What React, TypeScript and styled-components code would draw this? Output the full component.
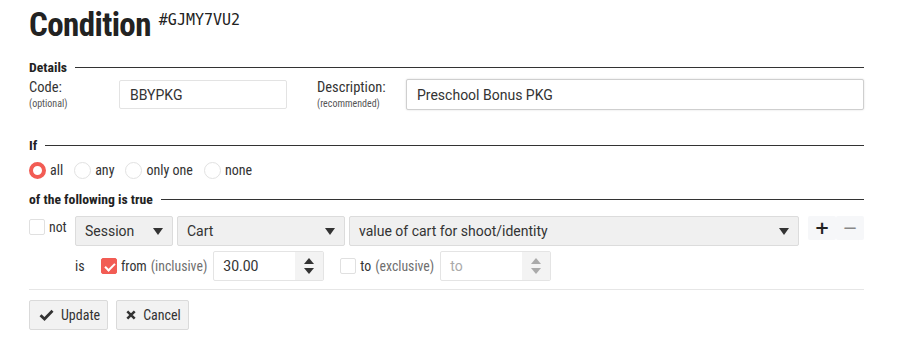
import React, {useState} from 'react'
import styled, {createGlobalStyle} from 'styled-components'

const Global = createGlobalStyle`
  body {
    margin: 0;
    background: #fff;
    color: #333;
    font-family: 'Roboto Condensed', 'Liberation Sans Narrow', Roboto, sans-serif;
  }
  * { box-sizing: border-box; }
`

const RED = '#f25c54'

const App = () => {
  const [mode, setMode] = useState('all')
  const [not, setNot] = useState(false)
  const [fromOn, setFromOn] = useState(true)
  const [toOn, setToOn] = useState(false)

  return (
    <Page>
      <Global />
      <Header>
        <Title>Condition</Title>
        <Code>#GJMY7VU2</Code>
      </Header>

      <Legend>Details</Legend>
      <DetailsRow>
        <FieldLabel $w={90}>
          Code:
          <small>(optional)</small>
        </FieldLabel>
        <TextInput $w={168} defaultValue="BBYPKG" />
        <FieldLabel $w={89} $ml={30}>
          Description:
          <small>(recommended)</small>
        </FieldLabel>
        <TextInput $focused defaultValue="Preschool Bonus PKG" style={{flex: 1}} />
      </DetailsRow>

      <Legend $mt={26}>If</Legend>
      <RadioRow>
        {['all', 'any', 'only one', 'none'].map((m) => (
          <RadioLabel key={m} onClick={() => setMode(m)}>
            <Radio $on={mode === m} />
            {m}
          </RadioLabel>
        ))}
      </RadioRow>

      <Legend $mt={11}>of the following is true</Legend>
      <RuleRow>
        <CheckLabel onClick={() => setNot(!not)}>
          <Check $on={not} />
          not
        </CheckLabel>
        <Select $w={98}>Session<Caret /></Select>
        <Select $w={168}>Cart<Caret /></Select>
        <Select style={{flex: 1}}>value of cart for shoot/identity<Caret /></Select>
        <PlusMinus>
          <IconBtn>+</IconBtn>
          <IconBtn $muted>−</IconBtn>
        </PlusMinus>
      </RuleRow>
      <RangeRow>
        <IsLabel>is</IsLabel>
        <CheckLabel onClick={() => setFromOn(!fromOn)}>
          <Check $on={fromOn} />
          from <Muted>(inclusive)</Muted>
        </CheckLabel>
        <NumberBox>
          <span>30.00</span>
          <Spinner><SpinUp /><SpinDown /></Spinner>
        </NumberBox>
        <CheckLabel $ml={12} onClick={() => setToOn(!toOn)}>
          <Check $on={toOn} />
          to <Muted>(exclusive)</Muted>
        </CheckLabel>
        <NumberBox $disabled>
          <Placeholder>to</Placeholder>
          <Spinner $disabled><SpinUp /><SpinDown /></Spinner>
        </NumberBox>
      </RangeRow>

      <Divider />
      <Actions>
        <Button>
          <svg width="15" height="12" viewBox="0 0 15 12">
            <path d="M1.5 6.2 L5.5 10 L13.5 1.8" fill="none" stroke="#333" strokeWidth="2.8" />
          </svg>
          Update
        </Button>
        <Button>
          <svg width="10" height="10" viewBox="0 0 10 10">
            <path d="M1.3 1.3 L8.7 8.7 M8.7 1.3 L1.3 8.7" fill="none" stroke="#333" strokeWidth="2.5" />
          </svg>
          Cancel
        </Button>
      </Actions>
    </Page>
  )
}

export default App

const Page = styled.div`
  width: 907px;
  padding: 5px 43px 20px 29px;
`

const Header = styled.div`
  display: flex;
  align-items: flex-start;
  gap: 8px;
  height: 53px;
`

const Title = styled.h1`
  margin: 0;
  font-size: 33px;
  font-weight: 700;
  line-height: 40px;
  color: #222;
  letter-spacing: -0.6px;
`

const Code = styled.span`
  font-family: 'DejaVu Sans Mono', monospace;
  font-size: 15px;
  line-height: 18px;
  margin-top: 6px;
  color: #222;
`

const Legend = styled.div<{$mt?: number}>`
  display: flex;
  align-items: center;
  gap: 8px;
  margin-top: ${(p) => p.$mt ?? 0}px;
  font-size: 13.7px;
  font-weight: 700;
  line-height: 18px;
  color: #222;
  &::after {
    content: '';
    flex: 1;
    height: 1px;
    background: #333;
  }
`

const DetailsRow = styled.div`
  display: flex;
  align-items: center;
  margin-top: 3px;
`

const FieldLabel = styled.div<{$w: number, $ml?: number}>`
  width: ${(p) => p.$w}px;
  margin-left: ${(p) => p.$ml ?? 0}px;
  display: flex;
  flex-direction: column;
  font-size: 14.5px;
  line-height: 15px;
  color: #333;
  small {
    font-size: 10px;
    line-height: 12px;
    color: #555;
    margin-top: 3px;
  }
`

const TextInput = styled.input<{$w?: number, $focused?: boolean}>`
  width: ${(p) => (p.$w ? `${p.$w}px` : 'auto')};
  height: ${(p) => (p.$focused ? 31 : 29)}px;
  border: 1px solid ${(p) => (p.$focused ? '#cfcfcf' : '#e3e3e3')};
  box-shadow: ${(p) => (p.$focused ? '0 0 2px rgba(0,0,0,.15)' : 'none')};
  border-radius: 2px;
  padding: 0 10px;
  font-family: Roboto, sans-serif;
  font-size: 14px;
  color: #333;
  outline: none;
`

const RadioRow = styled.div`
  display: flex;
  align-items: center;
  gap: 11px;
  margin-top: 7px;
  height: 18px;
`

const RadioLabel = styled.label`
  display: flex;
  align-items: center;
  gap: 4px;
  font-size: 14px;
  color: #333;
  cursor: pointer;
`

const Radio = styled.span<{$on: boolean}>`
  width: 17px;
  height: 17px;
  border-radius: 50%;
  border: ${(p) => (p.$on ? `4px solid ${RED}` : '1px solid #e2e2e2')};
  background: #fff;
`

const RuleRow = styled.div`
  display: flex;
  align-items: flex-start;
  gap: 4px;
  margin-top: 8px;
`

const CheckLabel = styled.label<{$ml?: number}>`
  display: flex;
  align-items: center;
  gap: 4px;
  height: 29px;
  margin-left: ${(p) => p.$ml ?? 0}px;
  font-size: 13.8px;
  color: #333;
  cursor: pointer;
  ${RuleRow} & {
    align-items: flex-start;
    padding-top: 3px;
    width: 42px;
  }
`

const Check = styled.span<{$on: boolean}>`
  width: 16px;
  height: 16px;
  border-radius: 2px;
  border: 1px solid ${(p) => (p.$on ? RED : '#e0e0e0')};
  background: ${(p) => (p.$on ? RED : '#fff')};
  position: relative;
  &::after {
    content: '';
    display: ${(p) => (p.$on ? 'block' : 'none')};
    position: absolute;
    left: 4.5px;
    top: 1.5px;
    width: 4px;
    height: 8px;
    border: solid #fff;
    border-width: 0 2px 2px 0;
    transform: rotate(45deg);
  }
`

const Muted = styled.span`
  color: #6f6f6f;
`

const Select = styled.div<{$w?: number}>`
  width: ${(p) => (p.$w ? `${p.$w}px` : 'auto')};
  height: 30px;
  display: flex;
  align-items: center;
  justify-content: space-between;
  padding: 0 9px;
  background: #f0f0f0;
  border: 1px solid #dcdcdc;
  border-radius: 2px;
  font-family: Roboto, sans-serif;
  font-size: 14px;
  color: #333;
`

const Caret = styled.span`
  width: 0;
  height: 0;
  border-left: 5px solid transparent;
  border-right: 5px solid transparent;
  border-top: 7px solid #333;
`

const PlusMinus = styled.div`
  display: flex;
  margin-left: 5px;
`

const IconBtn = styled.button<{$muted?: boolean}>`
  width: 28px;
  height: 24px;
  border: none;
  background: #f6f7f9;
  border-radius: 2px;
  font-family: 'DejaVu Sans', sans-serif;
  font-size: 18px;
  line-height: 24px;
  padding: 0;
  color: ${(p) => (p.$muted ? '#888' : '#222')};
  font-weight: ${(p) => (p.$muted ? 400 : 700)};
`

const RangeRow = styled.div`
  display: flex;
  align-items: center;
  gap: 4px;
  margin-top: 5px;
  padding-left: 46px;
`

const IsLabel = styled.span`
  font-size: 14px;
  color: #333;
  width: 22px;
`

const NumberBox = styled.div<{$disabled?: boolean}>`
  width: 111px;
  height: 30px;
  display: flex;
  align-items: stretch;
  border: 1px solid #e4e4e4;
  border-radius: 2px;
  margin-left: 2px;
  font-family: Roboto, sans-serif;
  font-size: 14px;
  color: #333;
  span {
    flex: 1;
    display: flex;
    align-items: center;
    padding-left: 9px;
  }
`

const Placeholder = styled.span`
  color: #aaa;
`

const Spinner = styled.div<{$disabled?: boolean}>`
  width: 28px;
  background: #f3f3f3;
  display: flex;
  flex-direction: column;
  align-items: center;
  justify-content: center;
  gap: 4px;
  --c: ${(p) => (p.$disabled ? '#aaa' : '#333')};
`

const SpinUp = styled.i`
  width: 0;
  height: 0;
  border-left: 5px solid transparent;
  border-right: 5px solid transparent;
  border-bottom: 6px solid var(--c);
`

const SpinDown = styled.i`
  width: 0;
  height: 0;
  border-left: 5px solid transparent;
  border-right: 5px solid transparent;
  border-top: 6px solid var(--c);
`

const Divider = styled.hr`
  border: none;
  border-top: 1px solid #e6e6e6;
  margin: 8px 0 10px;
`

const Actions = styled.div`
  display: flex;
  gap: 8px;
`

const Button = styled.button`
  height: 30px;
  display: flex;
  align-items: center;
  gap: 7px;
  padding: 0 7px 0 9px;
  background: #f2f2f2;
  border: 1px solid #dadada;
  border-radius: 2px;
  font-family: 'Roboto Condensed', 'Liberation Sans Narrow', Roboto, sans-serif;
  font-size: 14px;
  color: #333;
`
